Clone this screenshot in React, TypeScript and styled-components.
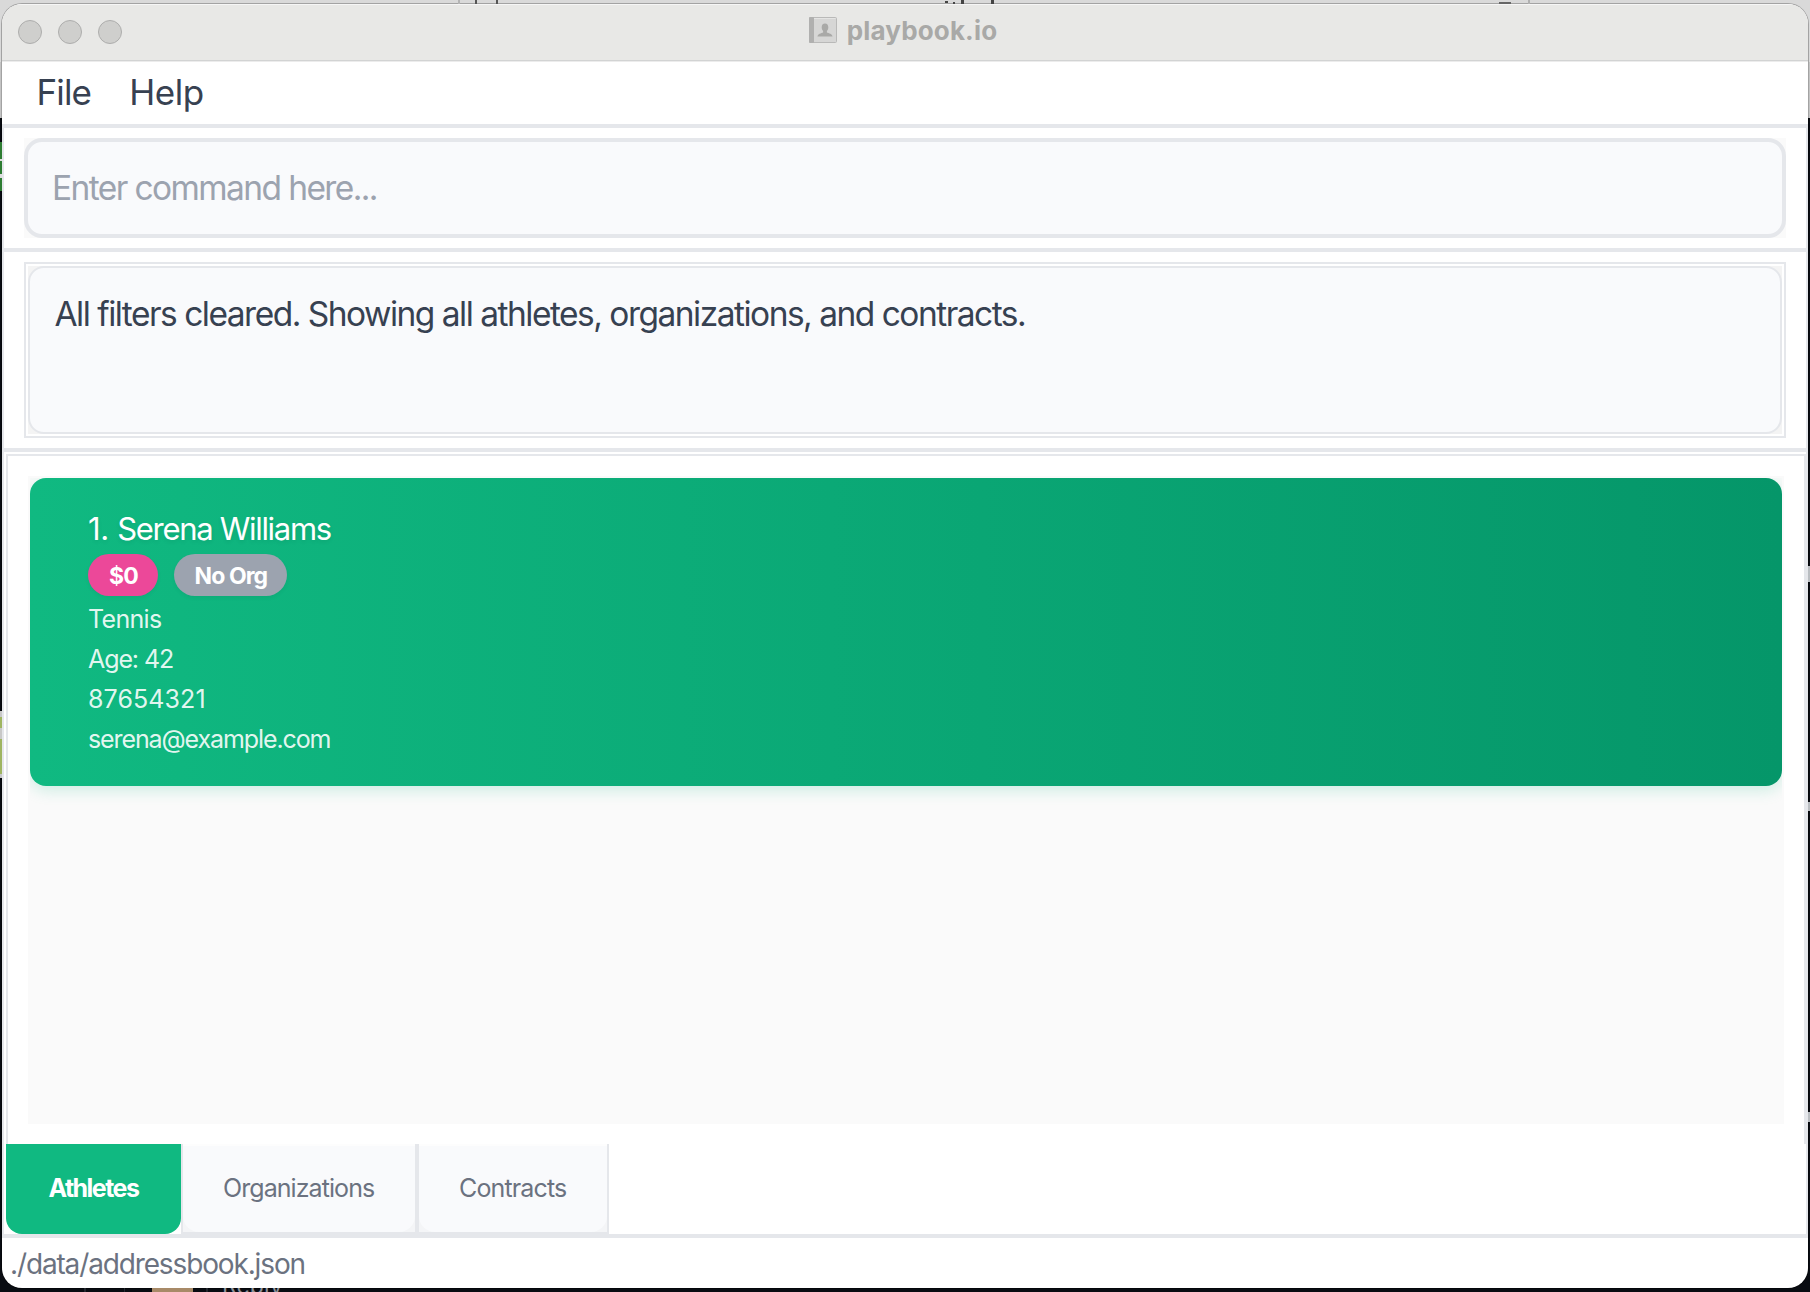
import React from "react";
import styled, { createGlobalStyle } from "styled-components";

const line = "#e5e7eb";

const GlobalStyle = createGlobalStyle`
  html, body { margin: 0; padding: 0; }
  body { width: 1810px; height: 1292px; overflow: hidden; }
  *, *::before, *::after { box-sizing: border-box; }
`;

const Desktop = styled.div`
  position: relative;
  display: flex;
  width: 1810px;
  height: 1292px;
  padding: 4px 2px;
  overflow: hidden;
  background: linear-gradient(#d9d9d9 0 62px, #c4c4c4 62px 118px, #090c12 118px);
  font-family: Inter, "Liberation Sans", sans-serif;
`;

const Speck = styled.i<{ $x: number; $y: number; $w: number; $h: number; $c: string }>`
  position: absolute;
  left: ${(p) => p.$x}px;
  top: ${(p) => p.$y}px;
  width: ${(p) => p.$w}px;
  height: ${(p) => p.$h}px;
  background: ${(p) => p.$c};
`;

const BackText = styled.span`
  position: absolute;
  left: 222px;
  top: 1272px;
  font-size: 23px;
  line-height: 28px;
  color: #8b9098;
`;

const Window = styled.main`
  position: relative;
  display: flex;
  flex-direction: column;
  width: 1806px;
  height: 1284px;
  border-radius: 20px;
  overflow: hidden;
  background: #fff;
`;

const WindowEdge = styled.div`
  position: absolute;
  left: 1px;
  top: 3px;
  width: 1808px;
  height: 1286px;
  border-radius: 21px;
  background: linear-gradient(#a3a3a3 0 115px, #05070b 115px);
`;

const TitleBar = styled.header`
  position: relative;
  display: flex;
  flex: 0 0 58px;
  justify-content: center;
  gap: 10px;
  padding-right: 4px;
  background: #e8e8e6;
  border-bottom: 1px solid #ececec;
  box-shadow: inset 0 1px 0 #f6f6f6, inset 0 -1px 0 #d2d3d3;
  color: #a9a9a7;
`;

const Lights = styled.div`
  position: absolute;
  left: 16px;
  top: 16px;
  display: flex;
  gap: 16px;
`;

const Light = styled.span`
  width: 24px;
  height: 24px;
  border: 1px solid #adadac;
  border-radius: 50%;
  background: #cfcfcd;
`;

const BookIcon = styled.svg`
  display: block;
  width: 28px;
  height: 28px;
  margin-top: 12px;
`;

const Title = styled.h1`
  margin: 0;
  font-size: 26px;
  font-weight: 700;
  line-height: 53px;
  letter-spacing: 0.15px;
`;

const MenuBar = styled.nav`
  display: flex;
  flex: 0 0 66px;
  gap: 38px;
  padding-left: 34.5px;
  border-bottom: 4px solid ${line};
`;

const MenuItem = styled.span<{ $tracking: number }>`
  font-size: 35px;
  line-height: 60px;
  letter-spacing: ${(p) => p.$tracking}px;
  color: #374151;
`;

const Body = styled.div`
  display: flex;
  flex-direction: column;
  flex: 0 0 1106px;
  border: solid ${line};
  border-width: 0 2px;
`;

const CommandPane = styled.section`
  flex: 0 0 124px;
  padding: 10px 20px;
  border-bottom: 4px solid ${line};
`;

const CommandBack = styled.div`
  height: 100px;
  background: #fafafa;
`;

const CommandInput = styled.div`
  height: 100px;
  padding-left: 24px;
  border: 4px solid ${line};
  border-radius: 18px;
  background: #f9fafc;
  font-size: 33.5px;
  line-height: 92px;
  letter-spacing: -1.6px;
  color: #9ca3af;
`;

const ResultPane = styled.section`
  flex: 0 0 200px;
  padding: 10px 20px;
  border-bottom: 4px solid ${line};
`;

const ResultFrame = styled.div`
  height: 176px;
  padding: 2px;
  border: 2px solid ${line};
`;

const ResultBack = styled.div`
  height: 168px;
  background: #f4f4f4;
`;

const ResultText = styled.div`
  height: 168px;
  padding: 26px 0 0 24.5px;
  border: 2px solid ${line};
  border-radius: 16px;
  background: #f9fafc;
  font-size: 33.5px;
  line-height: 41px;
  letter-spacing: -1.505px;
  color: #374151;
`;

const ListPane = styled.section`
  flex: 0 0 690px;
  margin: 2px 0 0 2px;
  padding: 20px;
  border: solid ${line};
  border-width: 2px 2px 0;
`;

const List = styled.div`
  height: 648px;
  padding: 2px;
  background: #fafafa;
`;

const Cell = styled.div`
  height: 340px;
  overflow: hidden;
`;

const Card = styled.article`
  display: flex;
  flex-direction: column;
  height: 308px;
  padding: 31px 0 0 58px;
  border-radius: 16px;
  background: linear-gradient(90deg, #10b981, #059669);
  box-shadow: 0 4px 16px rgba(16, 185, 129, 0.2);
  color: #fff;
`;

const Name = styled.h2`
  margin: 0;
  font-size: 31px;
  font-weight: 400;
  line-height: 40px;
  letter-spacing: -1.3px;
  text-shadow: 0 2px 4px rgba(0, 0, 0, 0.08);
`;

const Ordinal = styled.span`
  letter-spacing: -0.35px;
`;

const Pills = styled.div`
  display: flex;
  gap: 16px;
  margin: 5px 0 3px;
`;

const Pill = styled.span<{ $bg: string; $w: number; $inset: number; $tracking: number }>`
  width: ${(p) => p.$w}px;
  height: 42px;
  padding-left: ${(p) => p.$inset}px;
  border-radius: 21px;
  background: ${(p) => p.$bg};
  box-shadow: 0 2px 4px rgba(0, 0, 0, 0.05);
  font-size: 23px;
  font-weight: 700;
  line-height: 44px;
  letter-spacing: ${(p) => p.$tracking}px;
  white-space: nowrap;
`;

const Detail = styled.p<{ $tracking: number }>`
  margin: 0;
  font-size: 25px;
  line-height: 40px;
  letter-spacing: ${(p) => p.$tracking}px;
  color: rgba(255, 255, 255, 0.9);
`;

const Tabs = styled.div`
  display: flex;
  flex: 0 0 90px;
  padding-left: 2px;
`;

const ActiveTab = styled.div`
  width: 175px;
  padding-left: 42.5px;
  border-radius: 0 0 16px 16px;
  background: #10b981;
  color: #fff;
  font-size: 25px;
  font-weight: 700;
  line-height: 88px;
  letter-spacing: -1.55px;
`;

const TabFrame = styled.div<{ $w: number }>`
  width: ${(p) => p.$w}px;
  border: solid ${line};
  border-width: 0 2px 2px;
  background: #f4f5f7;
`;

const TabFace = styled.div<{ $tracking: number }>`
  height: 88px;
  padding-left: 40px;
  border-top: 2px solid #fdfdfd;
  border-radius: 0 0 16px 16px;
  background: #f9fafc;
  color: #6b7280;
  font-size: 25px;
  line-height: 84px;
  letter-spacing: ${(p) => p.$tracking}px;
`;

const StatusBar = styled.footer`
  flex: 0 0 54px;
  padding-left: 8px;
  border-top: 4px solid ${line};
  font-size: 28px;
  line-height: 52px;
  letter-spacing: -1.14px;
  color: #6b7280;
`;

const specks: [number, number, number, number, string][] = [
  [458, 0, 2, 4, "#b4b4b4"],
  [475, 0, 2, 4, "#555"],
  [496, 0, 2, 4, "#555"],
  [945, 1, 3, 2, "#444"],
  [953, 2, 2, 2, "#444"],
  [961, 0, 3, 4, "#444"],
  [991, 0, 3, 4, "#444"],
  [1499, 2, 12, 2, "#666"],
  [1528, 0, 2, 4, "#b0b0b0"],
  [0, 142, 2, 49, "#2e7d32"],
  [0, 159, 2, 2, "#ddd"],
  [0, 174, 2, 4, "#ddd"],
  [0, 711, 2, 67, "#9fb561"],
  [0, 711, 2, 6, "#c8c8c8"],
  [0, 728, 2, 11, "#c8c8c8"],
  [0, 774, 2, 4, "#c8c8c8"],
  [1808, 566, 2, 16, "#b9bdc1"],
  [1808, 802, 2, 9, "#b9bdc1"],
  [1808, 1112, 2, 10, "#b9bdc1"],
  [84, 1288, 2, 4, "#23272e"],
  [124, 1288, 1, 4, "#23272e"],
  [152, 1288, 41, 4, "#a88a68"],
  [206, 1288, 2, 4, "#23272e"],
];

export default function App() {
  return (
    <>
      <GlobalStyle />
      <Desktop>
        <WindowEdge />
        {specks.map(([x, y, w, h, c]) => (
          <Speck key={`${x}-${y}-${h}`} $x={x} $y={y} $w={w} $h={h} $c={c} />
        ))}
        <BackText>Reply</BackText>
        <Window>
          <TitleBar>
            <Lights>
              <Light />
              <Light />
              <Light />
            </Lights>
            <BookIcon viewBox="0 0 28 28">
              <rect x="0.5" y="1.5" width="27" height="25" rx="1" fill="#d6d6d5" stroke="#b9b9b8" />
              <rect x="0" y="1" width="5" height="26" rx="1" fill="#b0b0af" />
              <path d="M5 2.500h21.500" stroke="#e4e4e3" />
              <path d="M16 7.500c2.200 0 3.300 1.500 3.300 3.700 0 1.700-.6 2.900-1.400 3.700v1.500c1.800.8 5.600 1.300 5.600 4.100H8.500c0-2.800 3.800-3.300 5.600-4.100v-1.500c-.8-.8-1.400-2-1.400-3.700C12.700 9 13.800 7.500 16 7.500z" fill="#a9a9a7" />
            </BookIcon>
            <Title>playbook.io</Title>
          </TitleBar>
          <MenuBar>
            <MenuItem $tracking={-0.85}>File</MenuItem>
            <MenuItem $tracking={-0.4}>Help</MenuItem>
          </MenuBar>
          <Body>
            <CommandPane>
              <CommandBack>
                <CommandInput>Enter command here...</CommandInput>
              </CommandBack>
            </CommandPane>
            <ResultPane>
              <ResultFrame>
                <ResultBack>
                  <ResultText>All filters cleared. Showing all athletes, organizations, and contracts.</ResultText>
                </ResultBack>
              </ResultFrame>
            </ResultPane>
            <ListPane>
              <List>
                <Cell>
                  <Card>
                    <Name>
                      <Ordinal>1. </Ordinal>Serena Williams
                    </Name>
                    <Pills>
                      <Pill $bg="#ec4899" $w={70} $inset={21} $tracking={-0.7}>$0</Pill>
                      <Pill $bg="#9ca3af" $w={113} $inset={20.5} $tracking={-0.9}>No Org</Pill>
                    </Pills>
                    <Detail $tracking={-0.68}>Tennis</Detail>
                    <Detail $tracking={-1.1}>Age: 42</Detail>
                    <Detail $tracking={0.1}>87654321</Detail>
                    <Detail $tracking={-1.1}>serena@example.com</Detail>
                  </Card>
                </Cell>
              </List>
            </ListPane>
            <Tabs>
              <ActiveTab>Athletes</ActiveTab>
              <TabFrame $w={236}>
                <TabFace $tracking={-0.93}>Organizations</TabFace>
              </TabFrame>
              <TabFrame $w={192}>
                <TabFace $tracking={-0.85}>Contracts</TabFace>
              </TabFrame>
            </Tabs>
          </Body>
          <StatusBar>./data/addressbook.json</StatusBar>
        </Window>
      </Desktop>
    </>
  );
}
